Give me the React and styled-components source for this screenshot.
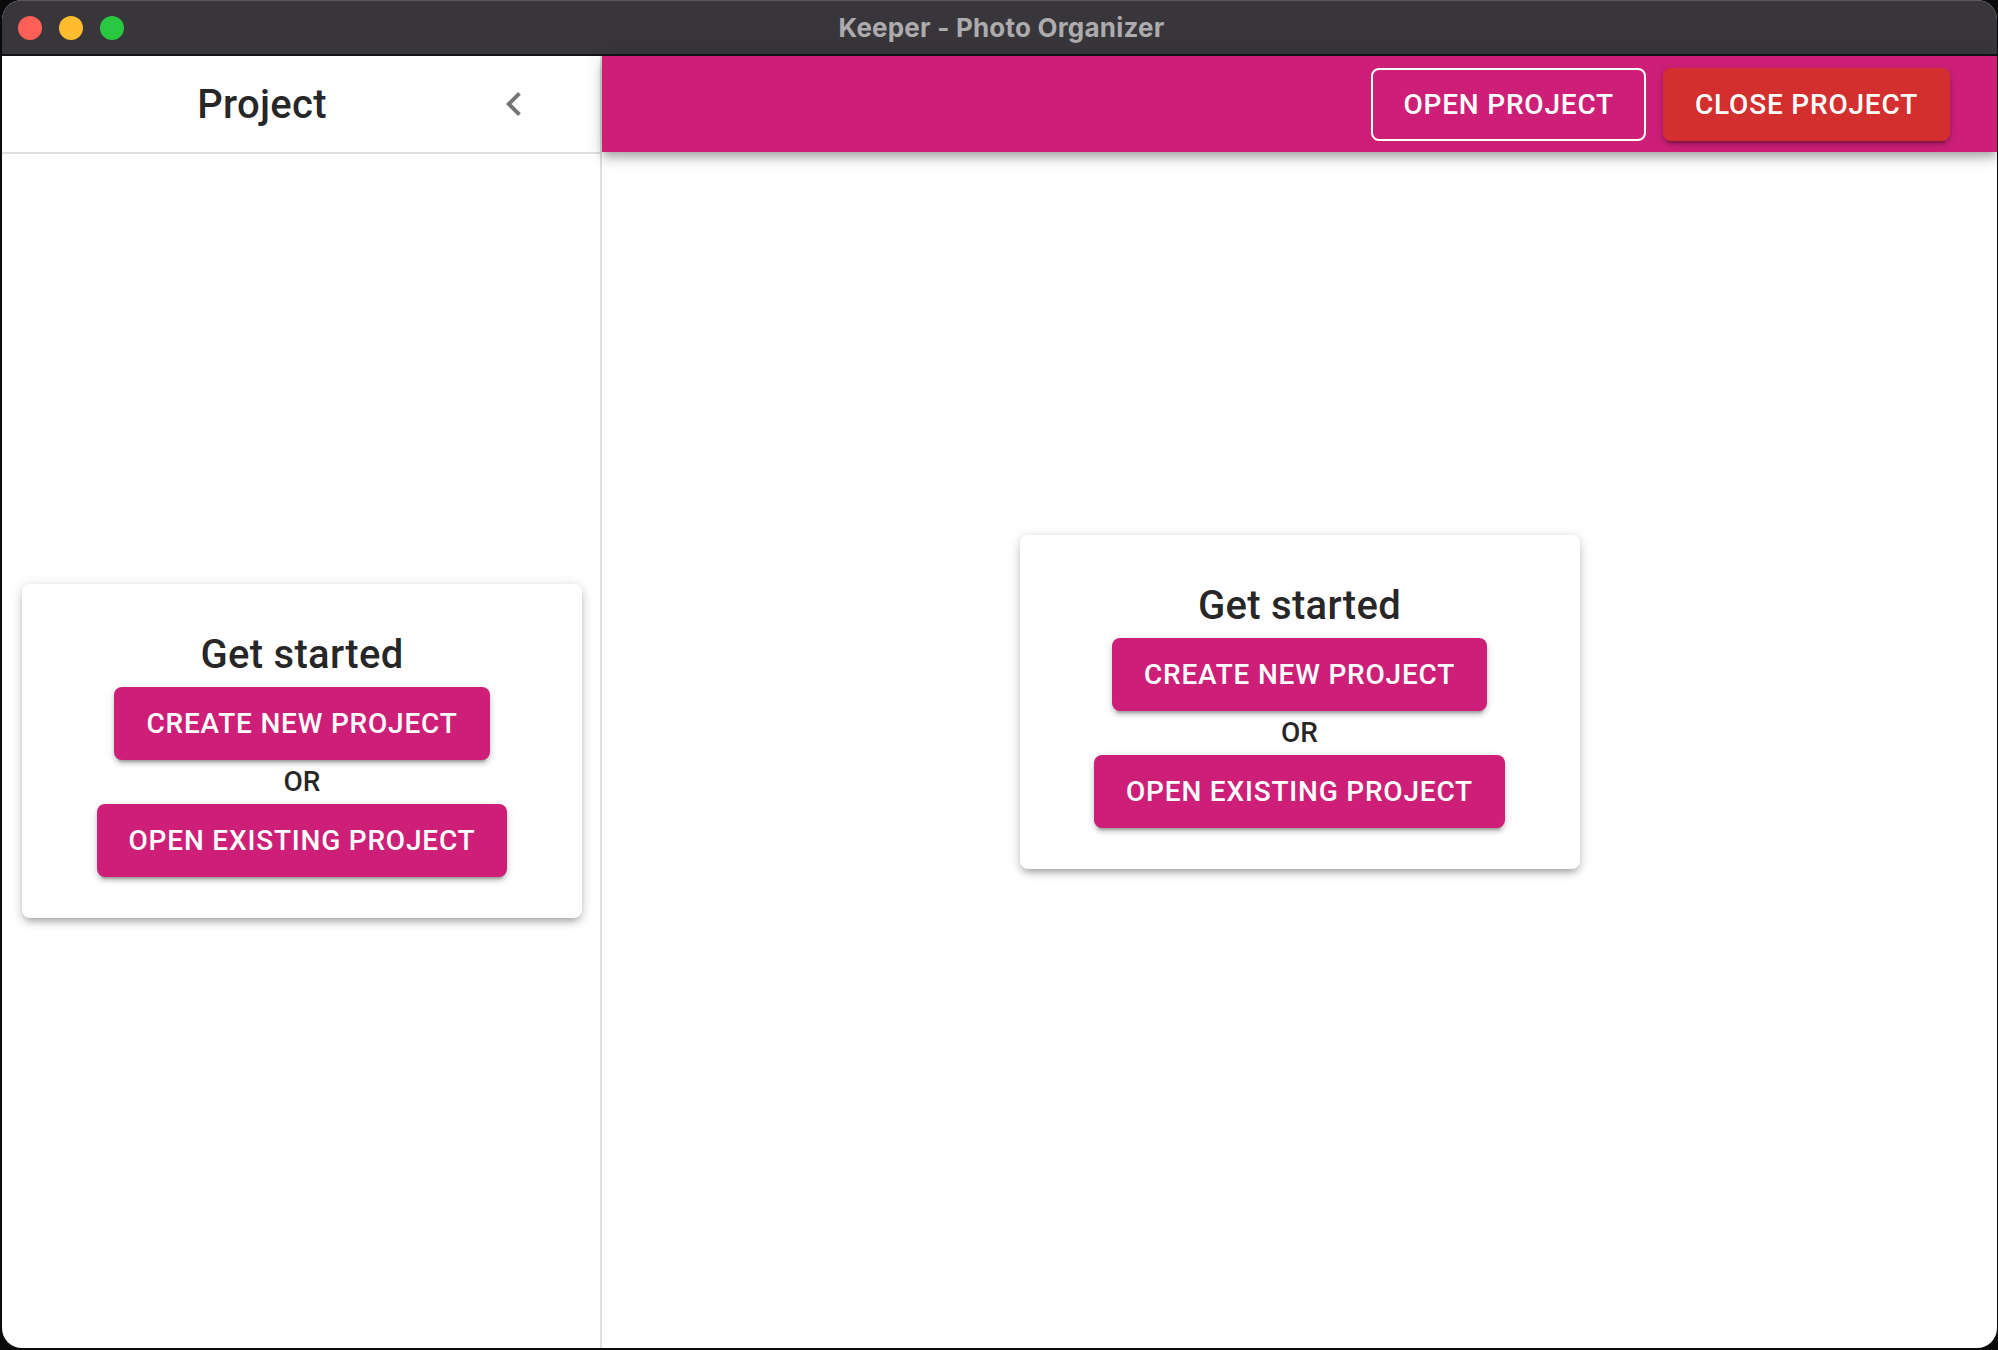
import React from 'react';
import styled, { createGlobalStyle } from 'styled-components';

const PINK = '#cd1f78';

const GlobalStyle = createGlobalStyle`
  html, body {
    margin: 0;
    padding: 0;
    background: #0b0b0b;
    font-family: Roboto, "Liberation Sans", sans-serif;
  }
  * {
    box-sizing: border-box;
  }
`;

const Window = styled.div`
  margin: 0 1px 2px 2px;
  height: 1348px;
  border-radius: 20px;
  overflow: hidden;
  background: #ffffff;
  display: flex;
  flex-direction: column;
`;

const TitleBar = styled.div`
  height: 56px;
  flex: none;
  background: #38363a;
  border-top: 1px solid #5a585c;
  border-bottom: 2px solid #151416;
  display: flex;
  align-items: center;
`;

const Lights = styled.div`
  display: flex;
  gap: 17px;
  padding-left: 16px;
`;

const Light = styled.span`
  width: 24px;
  height: 24px;
  border-radius: 50%;
  background: ${(p) => p.color};
`;

const WindowTitle = styled.div`
  flex: 1;
  text-align: center;
  margin-right: 118px;
  color: #adabae;
  font-family: Inter, "Liberation Sans", sans-serif;
  font-weight: 700;
  font-size: 26px;
  letter-spacing: 0.2px;
`;

const Body = styled.div`
  flex: 1;
  display: flex;
  min-height: 0;
`;

const Sidebar = styled.aside`
  width: 600px;
  flex: none;
  border-right: 2px solid #e0e0e0;
  display: flex;
  flex-direction: column;
`;

const SidebarHeader = styled.div`
  height: 98px;
  flex: none;
  border-bottom: 2px solid #e0e0e0;
  display: flex;
  align-items: center;
  padding: 0 46px 0 48px;
`;

const SidebarTitle = styled.h2`
  flex: 1;
  margin: 0;
  text-align: center;
  font-size: 40px;
  font-weight: 500;
  color: rgba(0, 0, 0, 0.87);
  letter-spacing: 0.3px;
`;

const IconButton = styled.button`
  width: 80px;
  height: 80px;
  border: 0;
  background: transparent;
  border-radius: 50%;
  display: flex;
  align-items: center;
  justify-content: center;
  padding: 0;
  color: rgba(0, 0, 0, 0.54);
  cursor: pointer;
`;

const SidebarContent = styled.div`
  flex: 1;
  display: flex;
  align-items: center;
  justify-content: center;
  padding: 0 18px 0 20px;
`;

const Main = styled.main`
  flex: 1;
  position: relative;
  display: flex;
  align-items: center;
  justify-content: center;
`;

const AppBar = styled.header`
  position: absolute;
  top: 0;
  left: 0;
  right: 0;
  height: 96px;
  background: ${PINK};
  display: flex;
  align-items: center;
  justify-content: flex-end;
  gap: 17px;
  padding-right: 47px;
  box-shadow: 0px 4px 8px -2px rgba(0, 0, 0, 0.2), 0px 8px 10px 0px rgba(0, 0, 0, 0.14),
    0px 2px 20px 0px rgba(0, 0, 0, 0.12);
`;

const Button = styled.button`
  font-family: Roboto, "Liberation Sans", sans-serif;
  font-weight: 500;
  font-size: 28px;
  line-height: 49px;
  letter-spacing: 0.8px;
  text-transform: uppercase;
  color: #ffffff;
  border-radius: 8px;
  cursor: pointer;
  padding: ${(p) => (p.variant === 'outlined' ? '10px 30px' : '12px 32px')};
  border: ${(p) => (p.variant === 'outlined' ? '2px solid #ffffff' : '0')};
  background: ${(p) =>
    p.variant === 'outlined' ? 'transparent' : p.variant === 'danger' ? '#d32f2f' : PINK};
  box-shadow: ${(p) =>
    p.variant === 'outlined'
      ? 'none'
      : '0px 6px 2px -4px rgba(0,0,0,0.2), 0px 4px 4px 0px rgba(0,0,0,0.14), 0px 2px 10px 0px rgba(0,0,0,0.12)'};
`;

const Card = styled.div`
  width: 560px;
  height: 334px;
  background: #ffffff;
  border-radius: 8px;
  box-shadow: 0px 6px 6px -4px rgba(0, 0, 0, 0.2), 0px 4px 8px 0px rgba(0, 0, 0, 0.14),
    0px 2px 14px 0px rgba(0, 0, 0, 0.12);
  display: flex;
  flex-direction: column;
  align-items: center;
  padding-top: 39px;
`;

const CardTitle = styled.h3`
  margin: 0;
  font-size: 40px;
  font-weight: 500;
  line-height: 64px;
  color: rgba(0, 0, 0, 0.87);
  letter-spacing: 0.3px;
`;

const Or = styled.div`
  font-size: 28px;
  font-weight: 500;
  line-height: 44px;
  color: rgba(0, 0, 0, 0.87);
`;

const GetStarted = () => (
  <Card>
    <CardTitle>Get started</CardTitle>
    <Button>Create new project</Button>
    <Or>OR</Or>
    <Button>Open existing project</Button>
  </Card>
);

const ChevronLeft = () => (
  <svg width="48" height="48" viewBox="0 0 24 24" fill="currentColor">
    <path d="M15.41 7.41 14 6l-6 6 6 6 1.41-1.41L10.83 12z" />
  </svg>
);

export default function App() {
  return (
    <>
      <GlobalStyle />
      <Window>
        <TitleBar>
          <Lights>
            <Light color="#fe5f57" />
            <Light color="#febc2e" />
            <Light color="#28c840" />
          </Lights>
          <WindowTitle>Keeper - Photo Organizer</WindowTitle>
        </TitleBar>
        <Body>
          <Sidebar>
            <SidebarHeader>
              <SidebarTitle>Project</SidebarTitle>
              <IconButton aria-label="close drawer">
                <ChevronLeft />
              </IconButton>
            </SidebarHeader>
            <SidebarContent>
              <GetStarted />
            </SidebarContent>
          </Sidebar>
          <Main>
            <GetStarted />
            <AppBar>
              <Button variant="outlined">Open project</Button>
              <Button variant="danger">Close project</Button>
            </AppBar>
          </Main>
        </Body>
      </Window>
    </>
  );
}
